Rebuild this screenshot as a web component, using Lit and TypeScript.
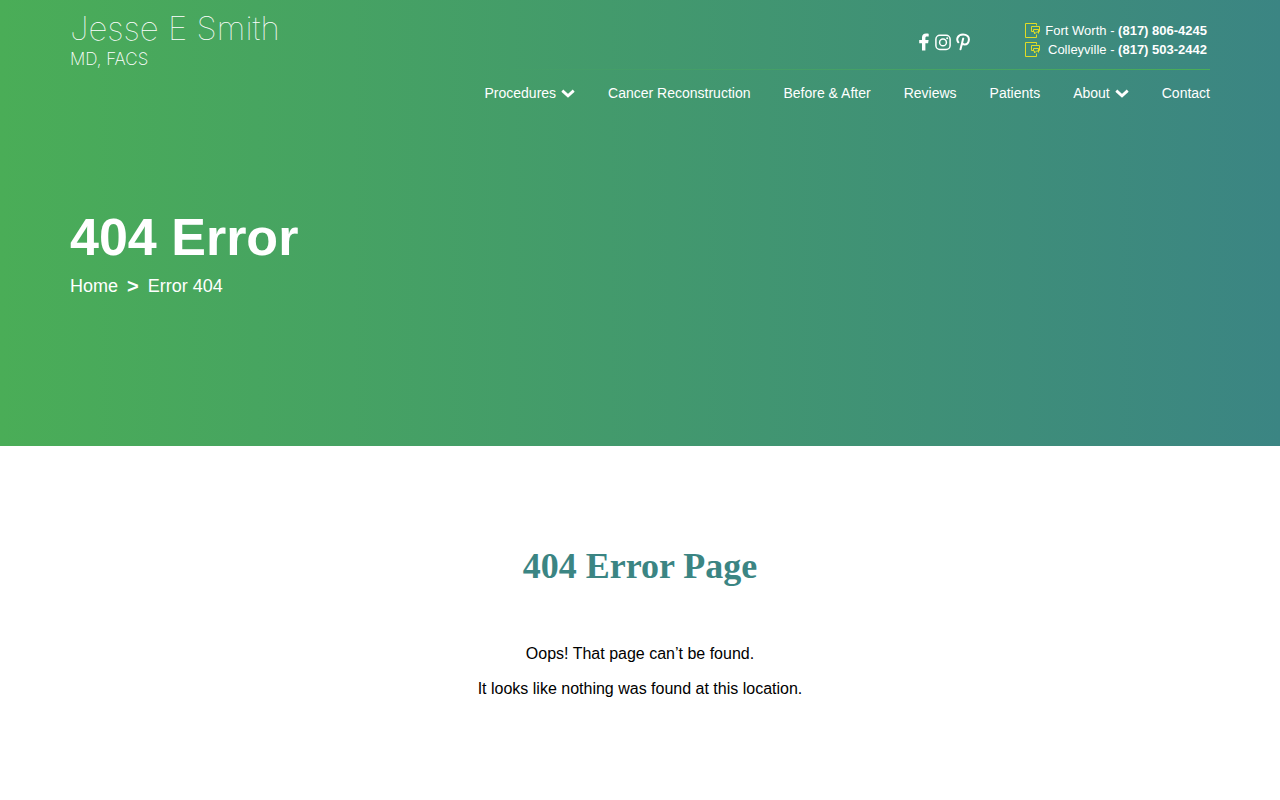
import { LitElement, html, css, svg, nothing } from "lit";
import { customElement } from "lit/decorators.js";

const NAV = [
  { label: "Procedures", menu: true },
  { label: "Cancer Reconstruction" },
  { label: "Before & After" },
  { label: "Reviews" },
  { label: "Patients" },
  { label: "About", menu: true },
  { label: "Contact" },
];

const PHONES = [
  { place: "Fort Worth", number: "(817) 806-4245" },
  { place: "Colleyville", number: "(817) 503-2442" },
];

const SOCIAL = [
  {
    name: "Facebook",
    width: 11,
    box: "0 0 11 18",
    art: svg`<path fill="#fff" d="M3 17.500V10.200H.2V7H3V4.600C3 1.800 4.600.6 7.100.6c1.200 0 2.300.1 2.600.2v2.800H8C6.700 3.600 6.400 4.200 6.400 5.200V7h3.200l-.5 3.200H6.400v7.300z"/>`,
  },
  {
    name: "Instagram",
    width: 16,
    box: "0 0 16 18",
    art: svg`<g fill="none" stroke="#fff" stroke-width="1.5"><rect x=".9" y="2.300" width="14.200" height="14.200" rx="4"/><circle cx="8" cy="9.400" r="3.400"/></g><circle cx="12.200" cy="5.300" r="1" fill="#fff"/>`,
  },
  {
    name: "Pinterest",
    width: 14,
    box: "0 0 14 18",
    art: svg`<path fill="none" stroke="#fff" stroke-width="2" stroke-linecap="round" stroke-linejoin="round" d="M2.300 9.300C.2 6.700 1.200 1.700 7 1.600c4 0 6.100 2.200 5.900 5-.2 3-2.100 4.900-4.300 4.900-1.200 0-2-.6-2.300-1.400M7.200 5.600 4.500 16.300"/>`,
  },
];

const chevron = html`<svg class="chevron" viewBox="0 0 14 9" aria-hidden="true">
  <path d="M1.300 1.600 7 6.900l5.700-5.300" fill="none" stroke="#fff" stroke-width="2.800" />
</svg>`;

const phoneIcon = html`<svg class="phone-icon" viewBox="0 0 15 15" aria-hidden="true">
  <g fill="none" stroke="#e0dc25">
    <path d="M11.500 2.500v-2H.5v14h11v-3" />
    <path d="M8.500 8.500h-2v-5h8v5h-1v2M8.500 6.500h5v2.500h-2l-2 2v-2h-1z" />
  </g>
</svg>`;

@customElement("app-root")
export class AppRoot extends LitElement {
  static styles = css`
    :host {
      display: block;
      min-height: 100vh;
      background: #fff;
      color: #000;
      font: 16px/24px "Liberation Sans", Arial, sans-serif;
    }
    a {
      color: inherit;
      text-decoration: none;
    }
    svg {
      display: block;
      flex: none;
    }
    h1, h2, p {
      margin: 0;
    }
    .hero {
      color: #fff;
      background: linear-gradient(90deg, #4aad57, #3b8583);
      padding-bottom: 148px;
    }
    .wrap {
      box-sizing: border-box;
      max-width: 1180px;
      margin: 0 auto;
      padding: 0 20px;
    }
    .header {
      display: flex;
      justify-content: space-between;
      align-items: flex-start;
      padding-top: 8px;
    }
    .logo {
      display: flex;
      flex-direction: column;
      font-family: Inter, Lato, sans-serif;
      font-weight: 100;
      white-space: nowrap;
    }
    .logo-name {
      font-size: 33px;
      line-height: 41px;
    }
    .logo-title {
      font-size: 17px;
      font-weight: 200;
      line-height: 20px;
    }
    .side {
      flex: 0 1 732px;
    }
    .top {
      display: flex;
      justify-content: flex-end;
      align-items: center;
      gap: 55px;
      height: 61px;
      padding-right: 3px;
    }
    .social {
      display: flex;
      gap: 5px;
      padding-top: 6px;
    }
    .social svg {
      height: 18px;
    }
    .phones {
      display: flex;
      flex-direction: column;
      padding-top: 2px;
      font-size: 13px;
      line-height: 19px;
    }
    .phone {
      display: flex;
      justify-content: space-between;
      align-items: center;
      gap: 5px;
      white-space: nowrap;
    }
    .phone-icon {
      width: 15px;
      height: 15px;
    }
    .rule {
      height: 1px;
      background: linear-gradient(90deg, transparent, #4aad57);
    }
    .nav {
      display: flex;
      justify-content: flex-end;
      gap: 33px;
      padding-top: 13px;
      font-size: 14px;
      line-height: 20px;
      white-space: nowrap;
    }
    .nav a {
      display: flex;
      align-items: center;
      gap: 5px;
    }
    .chevron {
      width: 14px;
      height: 9px;
    }
    .intro {
      padding-top: 104px;
    }
    .title {
      font-size: 52px;
      line-height: 60px;
    }
    .crumbs {
      display: flex;
      gap: 9px;
      margin-top: 7px;
      font-size: 18px;
      line-height: 24px;
    }
    .crumb-mark {
      font-size: 20px;
      font-weight: 700;
    }
    .content {
      padding-top: 96px;
      padding-bottom: 96px;
      text-align: center;
    }
    .subtitle {
      color: #3b8583;
      font: 700 36px/48px "Liberation Serif", "Times New Roman", serif;
      margin-bottom: 52px;
    }
    .content p + p {
      margin-top: 11px;
    }
  `;

  render() {
    return html`
      <div class="hero">
        <header class="wrap header">
          <a class="logo" href="#">
            <span class="logo-name">Jesse E Smith</span>
            <span class="logo-title">MD, FACS</span>
          </a>
          <div class="side">
            <div class="top">
              <div class="social">
                ${SOCIAL.map(
                  (s) => html`<a href="#" aria-label=${s.name}>
                    <svg viewBox=${s.box} width=${s.width}>${s.art}</svg>
                  </a>`
                )}
              </div>
              <div class="phones">
                ${PHONES.map(
                  (p) => html`<a class="phone" href="#">
                    ${phoneIcon}<span>${p.place} - <strong>${p.number}</strong></span>
                  </a>`
                )}
              </div>
            </div>
            <div class="rule"></div>
            <nav class="nav">
              ${NAV.map((n) => html`<a href="#">${n.label}${n.menu ? chevron : nothing}</a>`)}
            </nav>
          </div>
        </header>
        <div class="wrap intro">
          <h1 class="title">404 Error</h1>
          <nav class="crumbs" aria-label="Breadcrumb">
            <a href="#">Home</a><span class="crumb-mark">&gt;</span><span>Error 404</span>
          </nav>
        </div>
      </div>
      <main class="wrap content">
        <h2 class="subtitle">404 Error Page</h2>
        <p>Oops! That page can’t be found.</p>
        <p>It looks like nothing was found at this location.</p>
      </main>
    `;
  }
}
